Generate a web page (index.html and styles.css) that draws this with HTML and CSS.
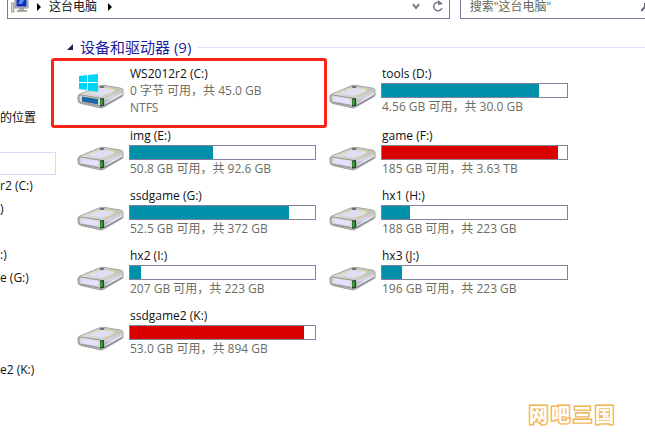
FILE: index.html
```html
<!DOCTYPE html>
<html lang="zh-CN">
<head>
<meta charset="utf-8">
<title>这台电脑</title>
<link rel="stylesheet" href="styles.css">
</head>
<body>
<svg class="defs" width="0" height="0" aria-hidden="true">
  <defs>
    <linearGradient id="side" x1="0" y1="0" x2="0" y2="1"><stop offset="0" stop-color="#c4c4b8"/><stop offset=".5" stop-color="#d6d6e4"/><stop offset="1" stop-color="#8a8a90"/></linearGradient>
    <linearGradient id="top" x1="0" y1="0" x2="1" y2="0"><stop offset="0" stop-color="#e0e0e6"/><stop offset="1" stop-color="#bdbdb5"/></linearGradient>
    <symbol id="drive" viewBox="0 0 48 26">
      <path d="M6 20 25 25 47 12 46 9 25 20Z" fill="#b5b5e0" opacity=".6"/>
      <path d="M1 12.500Q1 10.500 3 10L22 2Q25 1 28 1.500L43 4Q46 4.500 46 6V10.500Q46 12 44 13L27 22.500Q25 24 22 23.500L4 19.500Q1 19 1 16Z" fill="#cacac6" stroke="#a3a39c"/>
      <path d="M2 11 23 2.500Q25 1.500 28 2L45 5 26 14.500Z" fill="url(#top)"/>
      <path d="M27 15 45.500 5.500V10.500L27 22.500Z" fill="url(#side)"/>
      <path d="M28 19.500 45 9.500" stroke="#f0f0fa" fill="none"/>
      <path d="M28 21.500 45 11.500" stroke="#85858a" fill="none"/>
      <path d="M12 9 25 3.500 38 5.500Q36 10 24 12Z" fill="#dedef4"/>
      <path d="M28 4 38 5.500Q37 9 27 11" fill="none" stroke="#dedb9c"/>
      <path d="M12 9 22 4.500" stroke="#e4e1a8"/>
      <ellipse cx="25" cy="3" rx="2.500" ry="1" fill="#65656b"/>
      <path d="M2 12Q2 10.500 4 11L25 14.500V22.500L4 18.500Q2 18 2 16Z" fill="#d8d8d4" stroke="#95958a"/>
      <path d="M5 12.500 21 15V20.500L5 17.500Z" fill="var(--front)"/>
      <path d="M5 18 21 21" stroke="#9494a8" stroke-dasharray="2 1"/>
      <path d="M23 14.500 27 14V22L23 22.500Z" fill="#34423a"/>
      <path d="M23.500 15.500H25.500V21H23.500Z" fill="#20c51a"/>
    </symbol>
    <symbol id="winlogo" viewBox="0 0 19 18">
      <path d="M0 2 8 1V8H0ZM9 1 19 0V8H9ZM0 9H8V16L0 15ZM9 9H19V18L9 16.500Z" fill="#00d4f7"/>
    </symbol>
  </defs>
</svg>

<header class="toolbar">
  <nav class="address" aria-label="地址">
    <svg class="pc" viewBox="0 0 18 15" aria-hidden="true">
      <path d="M0 4H3V13H0Z" fill="#c8d4b4" stroke="#98a48a"/>
      <path d="M4 0H17V9H4Z" fill="#c5c7db" stroke="#858aa5"/>
      <path d="M5.500 0H15.500V7.500H5.500Z" fill="#1229b5"/>
      <path d="M9 0H14L11 5H7Z" fill="#568be4"/>
      <path d="M8 9H13V11H16V13H6V11H8Z" fill="#a8a894"/>
    </svg>
    <svg class="arrow" viewBox="0 0 4 8" aria-hidden="true"><path d="M0 0 4 4 0 8Z"/></svg>
    <a class="crumb" href="#">这台电脑</a>
    <svg class="arrow" viewBox="0 0 4 8" aria-hidden="true"><path d="M0 0 4 4 0 8Z"/></svg>
    <button class="tool first" type="button" aria-label="历史记录"><svg width="8" height="7" viewBox="0 0 8 7"><path d="M1 1 4 5 7 1" fill="none" stroke="#77778f" stroke-width="2"/></svg></button>
    <button class="tool" type="button" aria-label="刷新"><svg width="12" height="13" viewBox="0 0 12 13"><path d="M9.500 4A4.300 4.300 0 1 0 10 8" fill="none" stroke="#77778f" stroke-width="1.500"/><path d="M6 0V5L11 4Z" fill="#77778f"/></svg></button>
  </nav>
  <div class="search">
    <input type="text" aria-label="搜索" placeholder="搜索&quot;这台电脑&quot;">
    <svg width="4" height="11" viewBox="0 0 4 11" aria-hidden="true"><path d="M4 2V6L0 10" fill="none" stroke="#66667f" stroke-width="2"/></svg>
  </div>
</header>

<div class="window">
  <aside class="tree">
    <a class="place" href="#">的位置</a>
    <div class="selected"></div>
    <ul>
      <li>r2 (C:)</li>
      <li>)</li>
      <li></li>
      <li>:)</li>
      <li>e (G:)</li>
      <li></li>
      <li></li>
      <li></li>
      <li>e2 (K:)</li>
    </ul>
  </aside>

  <main>
    <h1><svg width="6" height="6" viewBox="0 0 6 6" aria-hidden="true"><path d="M6 0V6H0Z" fill="#222244"/></svg><span>设备和驱动器 (9)</span></h1>
    <ul class="drives">
      <li class="drive system">
        <div class="icon"><svg class="disk"><use href="#drive"/></svg><svg class="logo"><use href="#winlogo"/></svg></div>
        <div class="info"><h2>WS2012r2 (C:)</h2><p>0 字节 可用，共 45.0 GB</p><p>NTFS</p></div>
        <span class="marker"></span>
      </li>
      <li class="drive">
        <div class="icon"><svg class="disk"><use href="#drive"/></svg></div>
        <div class="info"><h2>tools (D:)</h2><div class="bar"><div class="fill" style="width:85%"></div></div><p>4.56 GB 可用，共 30.0 GB</p></div>
      </li>
      <li class="drive">
        <div class="icon"><svg class="disk"><use href="#drive"/></svg></div>
        <div class="info"><h2>img (E:)</h2><div class="bar"><div class="fill" style="width:45%"></div></div><p>50.8 GB 可用，共 92.6 GB</p></div>
      </li>
      <li class="drive">
        <div class="icon"><svg class="disk"><use href="#drive"/></svg></div>
        <div class="info"><h2>game (F:)</h2><div class="bar"><div class="fill full" style="width:95%"></div></div><p>185 GB 可用，共 3.63 TB</p></div>
      </li>
      <li class="drive">
        <div class="icon"><svg class="disk"><use href="#drive"/></svg></div>
        <div class="info"><h2>ssdgame (G:)</h2><div class="bar"><div class="fill" style="width:86%"></div></div><p>52.5 GB 可用，共 372 GB</p></div>
      </li>
      <li class="drive">
        <div class="icon"><svg class="disk"><use href="#drive"/></svg></div>
        <div class="info"><h2>hx1 (H:)</h2><div class="bar"><div class="fill" style="width:15%"></div></div><p>188 GB 可用，共 223 GB</p></div>
      </li>
      <li class="drive">
        <div class="icon"><svg class="disk"><use href="#drive"/></svg></div>
        <div class="info"><h2>hx2 (I:)</h2><div class="bar"><div class="fill" style="width:6%"></div></div><p>207 GB 可用，共 223 GB</p></div>
      </li>
      <li class="drive">
        <div class="icon"><svg class="disk"><use href="#drive"/></svg></div>
        <div class="info"><h2>hx3 (J:)</h2><div class="bar"><div class="fill" style="width:11%"></div></div><p>196 GB 可用，共 223 GB</p></div>
      </li>
      <li class="drive">
        <div class="icon"><svg class="disk"><use href="#drive"/></svg></div>
        <div class="info"><h2>ssdgame2 (K:)</h2><div class="bar"><div class="fill full" style="width:94%"></div></div><p>53.0 GB 可用，共 894 GB</p></div>
      </li>
    </ul>
  </main>
</div>
<div class="watermark"><span>网</span><span>吧</span><span>三</span><span>国</span></div>
</body>
</html>
```
FILE: styles.css
```css
* {
  box-sizing: border-box;
}

body {
  --front: #e2e2ff;
  margin: 0;
  min-height: 100vh;
  background: #fff;
  color: #111;
  font: 12px/17px "Open Sans", "Noto Sans CJK SC", sans-serif;
  overflow: hidden;
}

h1, h2, p, ul {
  margin: 0;
  padding: 0;
  font-size: 12px;
  font-weight: 400;
  list-style: none;
}

a {
  color: inherit;
  text-decoration: none;
}

.defs {
  position: absolute;
}

.toolbar {
  display: flex;
  gap: 10px;
  height: 19px;
  padding-left: 7px;
}

.address,
.search {
  display: flex;
  align-items: center;
  border: 1px solid #77779a;
  border-top: 0;
  padding-bottom: 5px;
}

.address {
  flex: 442 1 0;
  padding-left: 3px;
}

.pc {
  width: 18px;
  height: 15px;
}

.arrow {
  width: 4px;
  height: 8px;
  margin-left: 8px;
}

.crumb {
  margin-left: 8px;
  line-height: 13px;
}

.crumb + .arrow {
  margin-left: 11px;
}

.tool {
  display: flex;
  align-items: center;
  justify-content: center;
  width: 22px;
  height: 13px;
  padding: 0;
  border: 0;
  background: none;
}

.first {
  margin-left: auto;
}

.search {
  flex: 186 1 0;
  border-right: 0;
}

.search input {
  flex: 1;
  min-width: 0;
  height: 13px;
  padding: 0 0 0 9px;
  border: 0;
  outline: 0;
  background: none;
  font: inherit;
}

.search input::placeholder {
  color: #666655;
}

.window {
  display: flex;
}

.tree {
  width: 56px;
  padding-top: 90px;
  white-space: nowrap;
}

.place {
  display: block;
  line-height: 18px;
}

.selected {
  height: 23px;
  margin-top: 25px;
  border: 1px solid #d9d9ff;
  border-left: 0;
}

.tree ul {
  margin-top: -1px;
}

.tree li {
  height: 23px;
  line-height: 23px;
}

main {
  flex: 1;
  padding: 18px 0 0 11px;
}

h1 {
  display: flex;
  align-items: center;
  gap: 7px;
  height: 20px;
  color: #1d1d9f;
  font-size: 15px;
  line-height: 20px;
}

h1::after {
  content: "";
  flex: 1;
  height: 1px;
  background: #dfdfff;
}

.drives {
  display: grid;
  grid-template-columns: repeat(2, 239px);
  gap: 10px 13px;
  padding: 8px 0 0 10px;
}

.drive {
  position: relative;
  display: flex;
  gap: 4px;
}

.system {
  --front: #1d68a4;
  padding-bottom: 1px;
}

.icon {
  display: flex;
  align-items: flex-end;
  width: 48px;
  height: 45px;
}

.disk {
  width: 48px;
  height: 26px;
}

.logo {
  position: absolute;
  top: 9px;
  left: 2px;
  width: 19px;
  height: 18px;
}

.info {
  flex: 1;
}

.info h2,
.info p {
  padding-left: 1px;
}

.info p {
  color: #6d6d62;
}

.bar {
  height: 15px;
  margin-top: 1px;
  border: 1px solid #8282a0;
}

.fill {
  height: 100%;
  background: #0090aa;
}

.full {
  background: #da0000;
}

.marker {
  position: absolute;
  top: -7px;
  left: -26px;
  right: -11px;
  height: 70px;
  border: 3px solid #fb2318;
  border-radius: 3px;
}

.watermark {
  position: absolute;
  right: 31px;
  bottom: 10px;
  display: flex;
  gap: 3px;
  color: #fff;
  font: 700 19px/30px "Noto Sans CJK SC", sans-serif;
  -webkit-text-stroke: 3px #efb04f;
  paint-order: stroke fill;
  text-shadow: 0 1px 2px #f6cf91;
}
```
